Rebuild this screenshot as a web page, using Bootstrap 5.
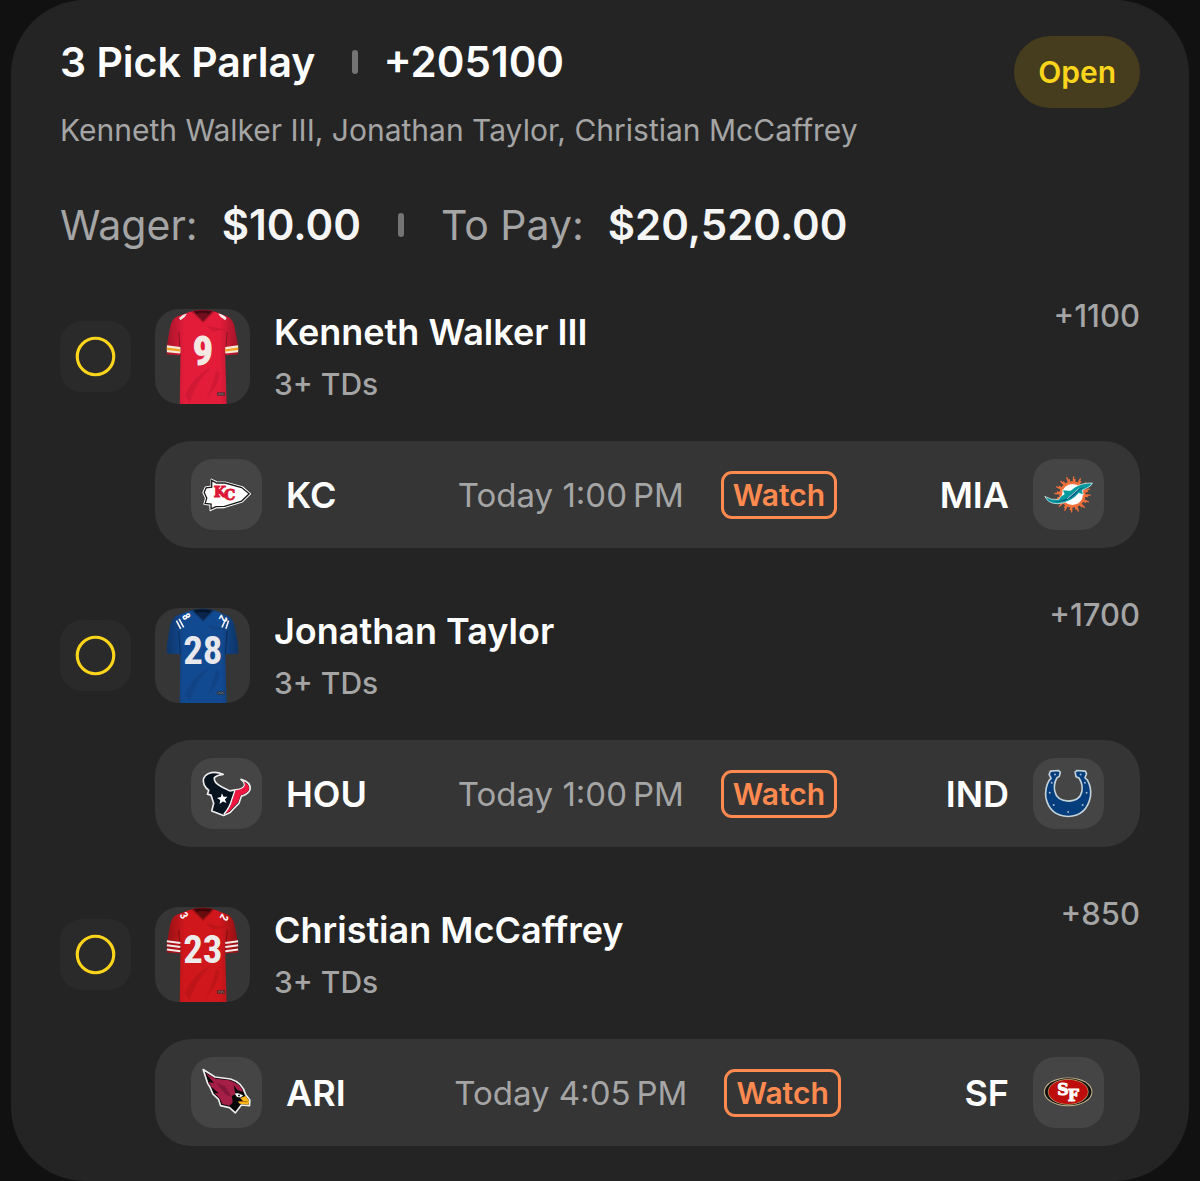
<!DOCTYPE html>
<html lang="en" data-bs-theme="dark">
<head>
<meta charset="utf-8">
<meta name="viewport" content="width=device-width, initial-scale=1">
<title>3 Pick Parlay</title>
<link href="https://cdn.jsdelivr.net/npm/bootstrap@5.3.0/dist/css/bootstrap.min.css" rel="stylesheet">
<style>
  body { background: #111; color: #f5f5f5; font-family: Inter, "Liberation Sans", sans-serif; }
  .slip { background: #242424; border-radius: 74px; margin: 0 11px; padding: 36px 49px 35px; }
  .slip-title, .money { font-size: 41px; line-height: 52px; font-weight: 600; }
  .figure-lg { font-size: 42px; }
  .muted { color: #a5a5a5; }
  .summary { font-size: 30px; line-height: 40px; margin-top: 22px; }
  .money { margin-top: 49px; }
  .money .muted { font-weight: 400; }
  .tick { width: 6px; height: 24px; margin: 0 37px; border-radius: 3px; background: #747474; flex: none; }
  .slip-title .tick { margin-right: 25px; }
  .status { background: #453d1e; color: #fbd41c; font-size: 30px; font-weight: 600; line-height: 40px; padding: 16px 24px; border-radius: 36px; }
  .legs { margin-top: 46px; gap: 48px; }
  .leg-main { gap: 24px; padding-top: 12px; }
  .state, .crest { width: 71px; height: 71px; border-radius: 22px; background: #2a2a2a; flex: none; }
  .shirt { width: 95px; height: 95px; border-radius: 24px; background: #363636; flex: none; }
  .who { gap: 10px; }
  .player { font-size: 36px; line-height: 44px; font-weight: 600; }
  .market { font-size: 30px; line-height: 40px; font-weight: 500; }
  .odds { font-size: 31px; line-height: 38px; font-weight: 500; }
  .game { background: #353535; border-radius: 36px; margin: 37px 0 0 95px; padding: 18px 36px; }
  .side { flex: 1 1 0; gap: 24px; font-size: 36px; line-height: 44px; font-weight: 600; color: #fff; }
  .crest { background: #454545; }
  .kick { gap: 37px; font-size: 33px; line-height: 44px; }
  .watch { --bs-btn-color: #ff8a50; --bs-btn-border-color: #ff8a50; --bs-btn-hover-color: #242424; --bs-btn-hover-bg: #ff8a50; --bs-btn-hover-border-color: #ff8a50;
    --bs-btn-font-size: 30px; --bs-btn-font-weight: 600; --bs-btn-line-height: 42px; --bs-btn-padding-x: 9px; --bs-btn-padding-y: 0; --bs-btn-border-width: 3px; --bs-btn-border-radius: 11px; }
  .num { font-family: "Liberation Sans Narrow", "Roboto Condensed", "DejaVu Sans Condensed", sans-serif; font-weight: 700; }
  .slab { font-family: "DejaVu Serif", "Liberation Serif", serif; font-weight: 700; }
</style>
</head>
<body>
<svg width="0" height="0" class="position-absolute" aria-hidden="true">
  <defs>
    <linearGradient id="shade" x1="0" x2="1"><stop offset="0" stop-color="#000" stop-opacity=".28"/><stop offset=".25" stop-color="#000" stop-opacity="0"/><stop offset=".75" stop-color="#000" stop-opacity="0"/><stop offset="1" stop-color="#000" stop-opacity=".3"/></linearGradient>
    <path id="shirt" d="M428 34Q459 27 492 34L534 51Q551 58 556 82L567 140V166L528 168L532 316H390L392 168L351 166V140L361 82Q366 58 382 51Z"/>
    <g id="folds">
      <use href="#shirt" fill="url(#shade)"/>
      <path d="M428 34Q459 27 492 34L461 66Z" fill="#000" opacity=".5"/>
      <path d="M434 35Q459 31 486 35L479 43Q459 38 441 43Z" fill="#000" opacity=".4"/>
      <path d="M424 34L461 69L496 34" fill="none" stroke="#000" stroke-opacity=".25" stroke-width="3"/>
      <path d="M392 168L387 98M528 168L534 98" stroke="#000" stroke-opacity=".35" stroke-width="3" fill="none"/>
      <path d="M405 290Q430 230 486 205Q440 245 420 312ZM500 215Q490 260 470 300Q505 265 512 222ZM470 78L530 90L490 96Z" fill="#000" opacity=".08"/>
      <path d="M503 280h24v11h-24z" fill="#333" opacity=".75"/><path d="M507 288l4-5 4 5 4-5 4 5" stroke="#999" stroke-width="1.5" fill="none"/>
    </g>
  </defs>
</svg>

<main class="slip">
  <header class="d-flex justify-content-between align-items-start">
    <div>
      <h1 class="slip-title d-flex align-items-center mb-0"><span>3 Pick Parlay</span><span class="tick"></span><span class="figure-lg">+205100</span></h1>
      <p class="summary muted mb-0">Kenneth Walker III, Jonathan Taylor, Christian McCaffrey</p>
    </div>
    <span class="status">Open</span>
  </header>
  <div class="money d-flex align-items-center">
    <span class="muted me-4">Wager:</span><span class="figure-lg">$10.00</span><span class="tick"></span><span class="muted me-4">To Pay:</span><span class="figure-lg">$20,520.00</span>
  </div>

  <div class="legs d-flex flex-column">
    <section>
      <div class="d-flex justify-content-between align-items-start">
        <div class="leg-main d-flex align-items-center">
          <svg class="state" viewBox="0 0 72 72" role="img" aria-label="Open"><circle cx="36" cy="36" r="18.5" fill="none" stroke="#fbd41c" stroke-width="3.2"/></svg>
          <svg class="shirt" viewBox="315 28 288 288" role="img" aria-label="Kansas City jersey">
            <use href="#shirt" fill="#e31c3a"/><use href="#folds"/>
            <path d="M388 55Q398 44 412 42L405 52L392 62ZM506 42Q522 44 532 55L528 62L514 52Z" fill="#f5e9e4"/>
            <path d="M351 138L392 143V163L351 159ZM528 143L567 138V159L528 163Z" fill="#f6ead6"/><path d="M351 145L392 150V157L351 152ZM528 150L567 145V152L528 157Z" fill="#f2a52b"/>
            <text class="num" x="460" y="198" font-size="122" text-anchor="middle" fill="#f3e9e2" stroke="#f3e9e2" stroke-width="3">9</text>
          </svg>
          <div class="who d-flex flex-column"><h2 class="player mb-0">Kenneth Walker III</h2><div class="market muted">3+ TDs</div></div>
        </div>
        <div class="odds muted">+1100</div>
      </div>
      <div class="game d-flex align-items-center">
        <div class="side d-flex align-items-center">
          <svg class="crest" viewBox="18 26 216 216" role="img" aria-label="Kansas City">
            <path d="M80 88L96 96L122 97L174 111L198 132L174 156L120 173L94 174L77 182L76 166L58 163L63 145L55 128L62 112L80 109Z" fill="#fff" stroke="#fff" stroke-width="5" stroke-linejoin="round"/>
            <path d="M81 91L96 99L122 99L172 113L195 132L172 154L120 170L94 171L79 178L79 163L61 161L66 145L58 128L64 114L81 112Z" fill="#fff" stroke="#191919" stroke-width="4"/>
            <text class="slab" x="87" y="141" font-size="43" fill="#dc1736" stroke="#dc1736" stroke-width="3">K<tspan dx="-6" dy="10">C</tspan></text>
          </svg><span>KC</span>
        </div>
        <div class="kick d-flex align-items-center muted"><span>Today 1:00&#8239;PM</span><button type="button" class="btn watch">Watch</button></div>
        <div class="side d-flex align-items-center justify-content-end"><span>MIA</span>
          <svg class="crest" viewBox="24 26 216 216" role="img" aria-label="Miami">
            <g fill="none" stroke="#f0703c"><circle cx="144" cy="134" r="49" stroke-width="12" stroke-dasharray="4 15.24"/><circle cx="144" cy="134" r="43" stroke-width="10" stroke-dasharray="8 8.88"/></g>
            <circle cx="144" cy="134" r="36" fill="#fff" stroke="#f0703c" stroke-width="8"/>
            <path d="M60 140Q80 152 102 149Q107 138 119 133L114 120L138 122Q164 97 205 99Q201 109 187 115L174 121L177 135L163 130Q142 158 100 162Q71 163 60 140Z" fill="#079b9f" stroke="#fff" stroke-width="2"/>
            <path d="M64 146Q84 158 104 156Q142 151 162 123L181 111Q160 116 145 132Q126 151 101 154Q82 156 64 146Z" fill="#075a80"/>
            <path d="M128 147Q148 131 163 116" stroke="#fff" stroke-width="2" fill="none"/>
          </svg>
        </div>
      </div>
    </section>

    <section>
      <div class="d-flex justify-content-between align-items-start">
        <div class="leg-main d-flex align-items-center">
          <svg class="state" viewBox="0 0 72 72" role="img" aria-label="Open"><circle cx="36" cy="36" r="18.5" fill="none" stroke="#fbd41c" stroke-width="3.2"/></svg>
          <svg class="shirt" viewBox="315 28 288 288" role="img" aria-label="Indianapolis jersey">
            <use href="#shirt" fill="#124a92"/><use href="#folds"/>
            <path d="M380 66L393 91M388 61L402 87M538 66L530 91M529 62L518 87" stroke="#f1f1f1" stroke-width="5"/>
            <text class="num" font-size="34" text-anchor="middle" fill="#fff" transform="translate(400 60) rotate(60)">8</text><text class="num" font-size="34" text-anchor="middle" fill="#fff" transform="translate(518 57) rotate(120)" y="7">2</text>
            <text class="num" x="460" y="199" font-size="118" text-anchor="middle" fill="#e8e8ec">28</text>
          </svg>
          <div class="who d-flex flex-column"><h2 class="player mb-0">Jonathan Taylor</h2><div class="market muted">3+ TDs</div></div>
        </div>
        <div class="odds muted">+1700</div>
      </div>
      <div class="game d-flex align-items-center">
        <div class="side d-flex align-items-center">
          <svg class="crest" viewBox="18 26 216 216" role="img" aria-label="Houston">
            <path d="M116 76Q91 65 70 74Q49 85 58 108Q63 119 72 124L68 136L79 139L87 164L81 187L117 201L137 192Q149 178 164 164L171 142Q193 136 198 121Q200 99 170 91Q184 102 180 112Q174 122 153 123L136 126L112 114Q86 102 89 86Q98 78 116 76Z" fill="#07121f" stroke="#ededed" stroke-width="5" stroke-linejoin="round"/>
            <path d="M153 125Q177 122 182 110Q182 100 176 97Q194 105 195 119Q192 134 169 139L161 161Q145 175 135 189L121 195Q142 169 145 149Z" fill="#ef1740"/>
            <path d="M151 126L142 153Q136 176 118 197" fill="none" stroke="#fff" stroke-width="4"/>
            <path d="M112 133L117 144L129 144L121 152L126 163L115 158L105 166L107 154L97 148L109 145Z" fill="#fff"/>
          </svg><span>HOU</span>
        </div>
        <div class="kick d-flex align-items-center muted"><span>Today 1:00&#8239;PM</span><button type="button" class="btn watch">Watch</button></div>
        <div class="side d-flex align-items-center justify-content-end"><span>IND</span>
          <svg class="crest" viewBox="24 26 216 216" role="img" aria-label="Indianapolis">
            <path d="M77 66L101 64L107 69L104 82L97 86Q86 105 90 126Q96 156 132 157Q168 156 173 126Q176 106 164 87L155 83L152 69L158 64L183 66L187 74L182 86L190 94Q202 116 199 142Q188 202 131 204Q74 202 63 146Q60 116 73 94L79 88L73 76Z" fill="#053d7d" stroke="#c4d2da" stroke-width="5" stroke-linejoin="round"/>
            <g fill="#a4b9cc"><circle cx="91" cy="76" r="3"/><circle cx="169" cy="76" r="3"/><circle cx="81" cy="101" r="3"/><circle cx="182" cy="101" r="3"/><circle cx="75" cy="132" r="3"/><circle cx="187" cy="132" r="3"/><circle cx="87" cy="169" r="3"/><circle cx="175" cy="169" r="3"/><circle cx="131" cy="190" r="3"/></g>
          </svg>
        </div>
      </div>
    </section>

    <section>
      <div class="d-flex justify-content-between align-items-start">
        <div class="leg-main d-flex align-items-center">
          <svg class="state" viewBox="0 0 72 72" role="img" aria-label="Open"><circle cx="36" cy="36" r="18.5" fill="none" stroke="#fbd41c" stroke-width="3.2"/></svg>
          <svg class="shirt" viewBox="315 28 288 288" role="img" aria-label="San Francisco jersey">
            <use href="#shirt" fill="#cf171c"/><use href="#folds"/>
            <path d="M351 132L392 137M351 144L392 149M351 157L392 162M528 137L567 132M528 149L567 144M528 162L567 157" stroke="#f3e9e9" stroke-width="6"/>
            <text class="num" font-size="34" text-anchor="middle" fill="#fff" transform="translate(393 60) rotate(60)">3</text><text class="num" font-size="34" text-anchor="middle" fill="#fff" transform="translate(521 57) rotate(120)" y="7">2</text>
            <text class="num" x="460" y="197" font-size="118" text-anchor="middle" fill="#ececec">23</text>
          </svg>
          <div class="who d-flex flex-column"><h2 class="player mb-0">Christian McCaffrey</h2><div class="market muted">3+ TDs</div></div>
        </div>
        <div class="odds muted">+850</div>
      </div>
      <div class="game d-flex align-items-center">
        <div class="side d-flex align-items-center">
          <svg class="crest" viewBox="18 26 216 216" role="img" aria-label="Arizona">
            <path d="M55 64L91 87L138 93Q175 104 184 140L197 157L196 174L171 172L153 196L135 180L108 174L102 155L85 139L76 118L69 107Z" fill="#080808" stroke="#eee" stroke-width="5" stroke-linejoin="round"/>
            <path d="M61 74L93 92L134 97Q168 107 177 132L160 127L148 112L153 139L142 145L145 164L135 174L113 169L106 152L89 135L103 137L81 118L71 102L88 105Z" fill="#a51e46"/>
            <path d="M94 104L121 115L142 147L123 139Z" fill="#83173a"/>
            <path d="M151 137L162 136L177 143L168 149L158 148Z" fill="#fff"/><circle cx="164" cy="143" r="3" fill="#111"/>
            <path d="M168 151L184 145L195 160L193 171L166 168L161 161L176 160Z" fill="#ffb71b"/><path d="M165 161L190 162" stroke="#8c4b05" stroke-width="2"/>
          </svg><span>ARI</span>
        </div>
        <div class="kick d-flex align-items-center muted"><span>Today 4:05&#8239;PM</span><button type="button" class="btn watch">Watch</button></div>
        <div class="side d-flex align-items-center justify-content-end"><span>SF</span>
          <svg class="crest" viewBox="24 26 216 216" role="img" aria-label="San Francisco">
            <ellipse cx="131" cy="132" rx="74" ry="44" fill="#c5b48b"/><ellipse cx="131" cy="132" rx="71" ry="41" fill="#111"/><ellipse cx="131" cy="132" rx="62" ry="39" fill="#c9a36c"/><ellipse cx="131" cy="132" rx="60" ry="37" fill="#bd0d0d"/>
            <text class="slab" x="98" y="141" font-size="48" fill="#fff" stroke="#fff" stroke-width="3" stroke-linejoin="round">S<tspan dx="-3" dy="18">F</tspan></text>
          </svg>
        </div>
      </div>
    </section>
  </div>
</main>
<script src="https://cdn.jsdelivr.net/npm/bootstrap@5.3.0/dist/js/bootstrap.bundle.min.js"></script>
</body>
</html>
